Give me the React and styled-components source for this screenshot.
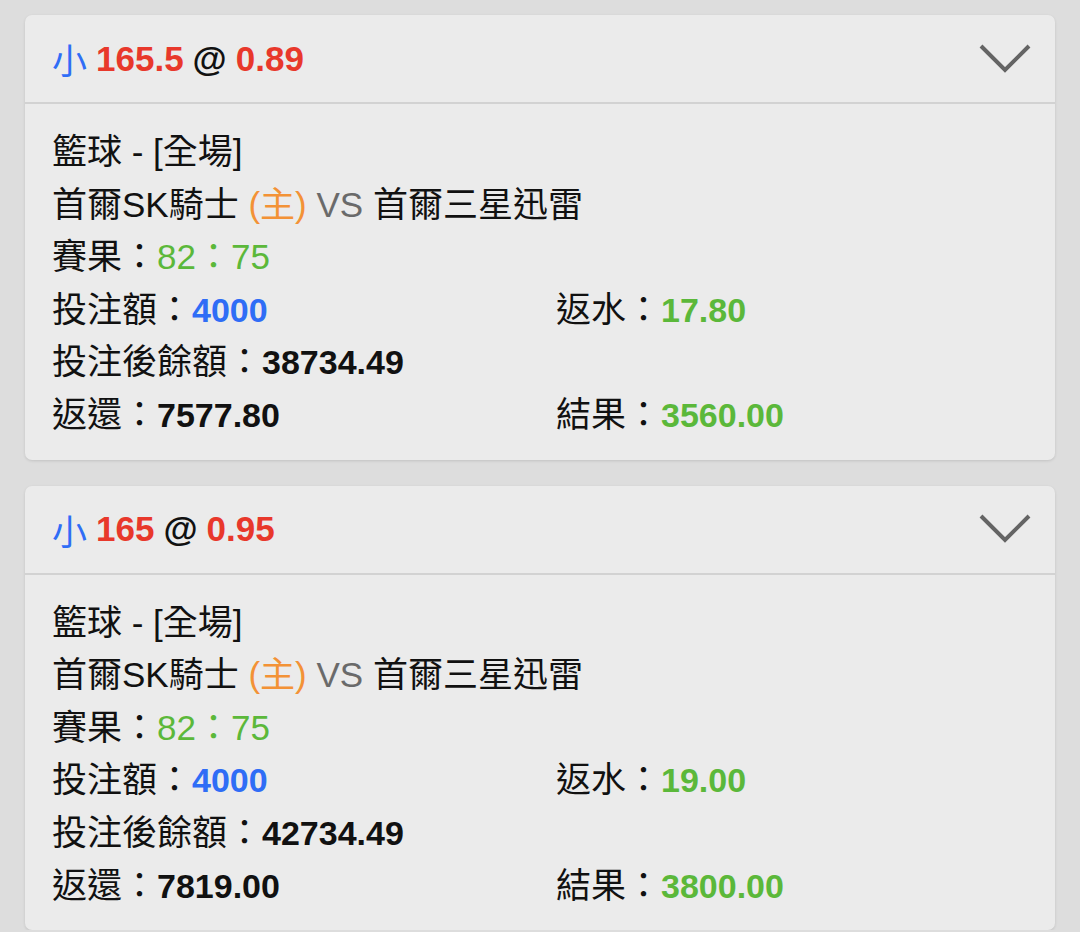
import styled, { createGlobalStyle } from "styled-components";

const GlobalStyle = createGlobalStyle`
  body {
    margin: 0;
    background: #dddddd;
    font-family: "Liberation Sans", "Noto Sans CJK TC", sans-serif;
    color: #111;
  }
`;

const Page = styled.div`
  display: flex;
  flex-direction: column;
  gap: 26px;
  padding: 15px 25px 0;
`;

const Card = styled.section`
  background: #ebebeb;
  border-radius: 7px;
  box-shadow: 0 1px 3px rgba(0, 0, 0, 0.12);
  overflow: hidden;
`;

const Header = styled.header`
  display: flex;
  align-items: center;
  justify-content: space-between;
  height: 87px;
  padding: 0 23px 0 27px;
  border-bottom: 2px solid #d2d2d2;
  font-size: 35px;
  font-weight: 700;
`;

const Title = styled.div`
  display: flex;
  align-items: center;
  gap: 9px;
  margin-top: 0;
`;

const Tone = styled.span`
  color: ${(p) => p.$color || "#111"};
  font-weight: ${(p) => (p.$light ? 400 : 700)};
`;

const Body = styled.div`
  padding: 22px 27px 18px;
  font-size: 35px;
  line-height: 52.6px;
`;

const Grid = styled.div`
  display: grid;
  grid-template-columns: 504px 1fr;
`;

const Line = styled.div`
  white-space: nowrap;
`;

const Value = styled.span`
  color: ${(p) => p.$color || "#111"};
  font-weight: ${(p) => (p.$bold ? 700 : 400)};
  font-size: ${(p) => (p.$bold ? "34px" : "35px")};
`;

const BLUE = "#2f6df6";
const RED = "#e8382b";
const GREEN = "#5bb83a";
const ORANGE = "#f39236";

function Chevron() {
  return (
    <svg width="54" height="34" viewBox="0 0 54 34">
      <polyline
        points="3,4 27,28 51,4"
        fill="none"
        stroke="#646464"
        strokeWidth="4"
      />
    </svg>
  );
}

const bets = [
  {
    line: "165.5",
    odds: "0.89",
    rebate: "17.80",
    balance: "38734.49",
    payout: "7577.80",
    result: "3560.00",
  },
  {
    line: "165",
    odds: "0.95",
    rebate: "19.00",
    balance: "42734.49",
    payout: "7819.00",
    result: "3800.00",
  },
];

function BetCard({ bet }) {
  return (
    <Card>
      <Header>
        <Title>
          <Tone $color={BLUE} $light>
            小
          </Tone>
          <Tone $color={RED}>{bet.line}</Tone>
          <Tone>@</Tone>
          <Tone $color={RED}>{bet.odds}</Tone>
        </Title>
        <Chevron />
      </Header>
      <Body>
        <Line>籃球 - [全場]</Line>
        <Line>
          首爾SK騎士 <Value $color={ORANGE}>(主)</Value>{" "}
          <Value $color="#6a6a6a">VS</Value> 首爾三星迅雷
        </Line>
        <Line>
          賽果：<Value $color={GREEN}>82：75</Value>
        </Line>
        <Grid>
          <Line>
            投注額：<Value $color={BLUE} $bold>4000</Value>
          </Line>
          <Line>
            返水：<Value $color={GREEN} $bold>{bet.rebate}</Value>
          </Line>
          <Line>
            投注後餘額：<Value $bold>{bet.balance}</Value>
          </Line>
          <Line />
          <Line>
            返還：<Value $bold>{bet.payout}</Value>
          </Line>
          <Line>
            結果：<Value $color={GREEN} $bold>{bet.result}</Value>
          </Line>
        </Grid>
      </Body>
    </Card>
  );
}

export default function App() {
  return (
    <>
      <GlobalStyle />
      <Page>
        {bets.map((bet) => (
          <BetCard key={bet.line} bet={bet} />
        ))}
      </Page>
    </>
  );
}
